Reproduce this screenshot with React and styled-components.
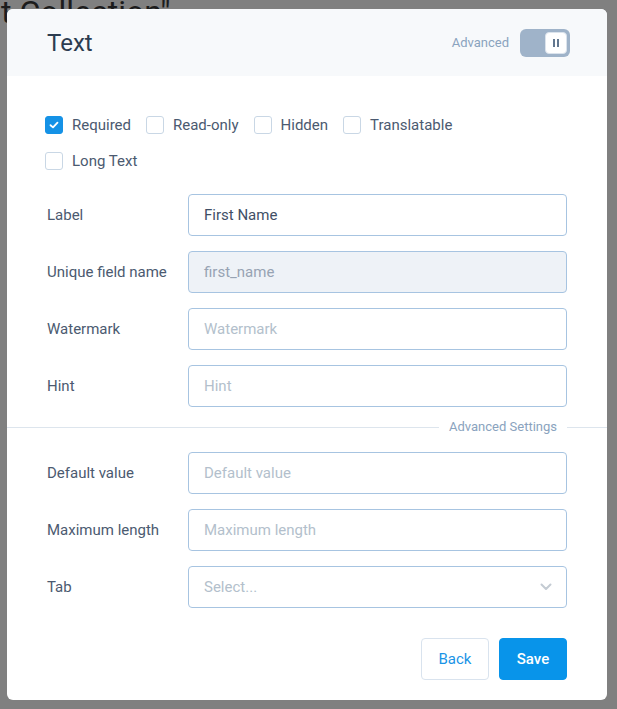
import React from "react";
import styled, { createGlobalStyle } from "styled-components";

const Global = createGlobalStyle`
  html, body { margin: 0; padding: 0; }
  body { font-family: Roboto, "Noto Sans", Arial, sans-serif; background: #808080; }
  * { box-sizing: border-box; }
`;

const Page = styled.div`
  position: relative;
  width: 617px;
  height: 709px;
  overflow: hidden;
  background: #808080;
`;

const BackTitle = styled.div`
  margin: -4px 0 0 1px;
  font-family: Roboto, Arial, sans-serif;
  font-size: 32px;
  line-height: 32px;
  color: #1c1c1c;
  white-space: nowrap;
`;

const Modal = styled.div`
  position: absolute;
  left: 7px;
  top: 9px;
  width: 600px;
  height: 691px;
  background: #ffffff;
  border-radius: 6px;
  overflow: hidden;
  display: flex;
  flex-direction: column;
`;

const Header = styled.div`
  height: 67px;
  flex: none;
  background: #f7f9fb;
  display: flex;
  align-items: center;
  justify-content: space-between;
  padding: 0 37px 0 40px;
`;

const Title = styled.h2`
  margin: 0;
  font-size: 24px;
  font-weight: 400;
  color: #2c3c50;
  line-height: 28px;
`;

const HeaderRight = styled.div`
  display: flex;
  align-items: center;
  gap: 11px;
`;

const AdvancedLabel = styled.span`
  font-size: 13px;
  color: #8aa3be;
`;

const Track = styled.div`
  width: 50px;
  height: 28px;
  border-radius: 6px;
  background: #9fb3c9;
  display: flex;
  align-items: center;
  justify-content: flex-end;
  padding-right: 3px;
`;

const Knob = styled.div`
  width: 22px;
  height: 22px;
  border-radius: 4px;
  background: #fff;
  border: 1px solid #dbe3ec;
  display: flex;
  align-items: center;
  justify-content: center;
  gap: 2px;
`;

const KnobBar = styled.span`
  width: 2px;
  height: 8px;
  background: #62778f;
`;

const Section = styled.div`
  padding: 0 40px;
`;

const CheckGroup = styled.div`
  display: flex;
  flex-direction: column;
  gap: 16px;
  padding-top: 39px;
  margin-left: -2px;
`;

const CheckRow = styled.div`
  display: flex;
  gap: 15px;
`;

const CheckItem = styled.label`
  display: flex;
  align-items: center;
  gap: 9px;
  height: 20px;
  font-size: 15px;
  color: #4b5a70;
`;

const Box = styled.span`
  width: 18px;
  height: 18px;
  border-radius: 3px;
  border: 1px solid ${(p) => (p.$checked ? "#1592e6" : "#c9d7e5")};
  background: ${(p) => (p.$checked ? "#1592e6" : "#fff")};
  display: flex;
  align-items: center;
  justify-content: center;
`;

const Form = styled.div`
  display: grid;
  grid-template-columns: 141px 1fr;
  row-gap: 15px;
  align-items: center;
  margin-top: ${(p) => p.$top || 0}px;
`;

const FieldLabel = styled.div`
  font-size: 15px;
  color: #4b5a70;
`;

const Field = styled.div`
  position: relative;
  height: 42px;
  border: 1px solid #a7c4e1;
  border-radius: 4px;
  background: ${(p) => (p.$disabled ? "#eef2f7" : "#fff")};
  display: flex;
  align-items: center;
  padding: 0 15px;
  font-size: 15px;
  color: ${(p) =>
    p.$placeholder ? "#b3bfcc" : p.$disabled ? "#97a3b3" : "#3f4f66"};
`;

const Chevron = styled.svg`
  position: absolute;
  right: 14px;
  top: 50%;
  margin-top: -4px;
`;

const Divider = styled.div`
  display: flex;
  align-items: center;
  margin-top: 12px;
  height: 16px;
`;

const Line = styled.div`
  height: 1px;
  background: #dde5ed;
  flex: ${(p) => (p.$fixed ? "none" : "1")};
  width: ${(p) => (p.$fixed ? "40px" : "auto")};
`;

const DividerText = styled.span`
  font-size: 13px;
  color: #8aa3be;
  padding: 0 10px;
  line-height: 16px;
`;

const Footer = styled.div`
  display: flex;
  justify-content: flex-end;
  gap: 10px;
  padding: 30px 40px 20px;
`;

const Button = styled.button`
  width: 68px;
  height: 42px;
  border-radius: 4px;
  font-family: Roboto, Arial, sans-serif;
  font-size: 15px;
  font-weight: ${(p) => (p.$primary ? 500 : 400)};
  border: 1px solid ${(p) => (p.$primary ? "#0894ea" : "#d9e3ee")};
  background: ${(p) => (p.$primary ? "#0894ea" : "#fff")};
  color: ${(p) => (p.$primary ? "#fff" : "#1a94e6")};
  cursor: pointer;
`;

const Check = ({ label, checked }) => (
  <CheckItem>
    <Box $checked={checked}>
      {checked && (
        <svg width="10" height="8" viewBox="0 0 10 8">
          <polyline
            points="1.5,4.2 4,6.4 8.5,1.6"
            fill="none"
            stroke="#fff"
            strokeWidth="1.8"
            strokeLinecap="round"
            strokeLinejoin="round"
          />
        </svg>
      )}
    </Box>
    {label}
  </CheckItem>
);

export default function App() {
  return (
    <Page>
      <Global />
      <BackTitle>t Collection"</BackTitle>
      <Modal>
        <Header>
          <Title>Text</Title>
          <HeaderRight>
            <AdvancedLabel>Advanced</AdvancedLabel>
            <Track>
              <Knob>
                <KnobBar />
                <KnobBar />
              </Knob>
            </Track>
          </HeaderRight>
        </Header>
        <Section>
          <CheckGroup>
            <CheckRow>
              <Check label="Required" checked />
              <Check label="Read-only" />
              <Check label="Hidden" />
              <Check label="Translatable" />
            </CheckRow>
            <CheckRow>
              <Check label="Long Text" />
            </CheckRow>
          </CheckGroup>
          <Form $top={23}>
            <FieldLabel>Label</FieldLabel>
            <Field>First Name</Field>
            <FieldLabel>Unique field name</FieldLabel>
            <Field $disabled>first_name</Field>
            <FieldLabel>Watermark</FieldLabel>
            <Field $placeholder>Watermark</Field>
            <FieldLabel>Hint</FieldLabel>
            <Field $placeholder>Hint</Field>
          </Form>
        </Section>
        <Divider>
          <Line />
          <DividerText>Advanced Settings</DividerText>
          <Line $fixed />
        </Divider>
        <Section>
          <Form $top={17}>
            <FieldLabel>Default value</FieldLabel>
            <Field $placeholder>Default value</Field>
            <FieldLabel>Maximum length</FieldLabel>
            <Field $placeholder>Maximum length</Field>
            <FieldLabel>Tab</FieldLabel>
            <Field $placeholder>
              Select...
              <Chevron width="12" height="8" viewBox="0 0 12 8">
                <polyline
                  points="1.5,1.5 6,6 10.5,1.5"
                  fill="none"
                  stroke="#c4cbd3"
                  strokeWidth="2"
                  strokeLinecap="round"
                  strokeLinejoin="round"
                />
              </Chevron>
            </Field>
          </Form>
        </Section>
        <Footer>
          <Button>Back</Button>
          <Button $primary>Save</Button>
        </Footer>
      </Modal>
    </Page>
  );
}
